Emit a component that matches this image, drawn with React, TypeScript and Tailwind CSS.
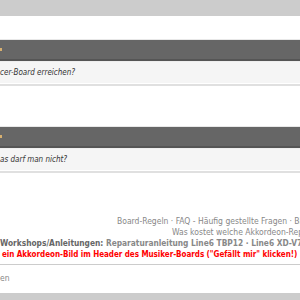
export default function App() {
  const font = { fontFamily: "'DejaVu Sans Condensed', Tahoma, 'DejaVu Sans', sans-serif" };
  return (
    <div className="w-[300px] h-[300px] overflow-hidden bg-white flex flex-col" style={font}>
      <div className="h-[16px] bg-[#cccccc] shrink-0" />
      <div className="h-[23px] shrink-0" />

      <Section text="cer-Board erreichen?" />
      <div className="h-[40px] shrink-0" />
      <Section text="as darf man nicht?" />

      {/* footer links */}
      <div className="mt-[43px] leading-[11px] whitespace-nowrap">
        <div className="pl-[117px] text-[8.5px] text-[#888888]">Board-Regeln · FAQ - Häufig gestellte Fragen · Bitte beachten</div>
        <div className="pl-[172px] text-[8.5px] text-[#888888]">Was kostet welche Akkordeon-Reparatur?</div>
        <div className="text-[8.3px] font-bold">
          <span className="text-[#666666]">Workshops/Anleitungen:</span>{" "}
          <span className="text-[#888888]">Reparaturanleitung Line6 TBP12 · Line6 XD-V75</span>
        </div>
        <div className="pl-[2px] text-[8px] tracking-[-0.04px] font-bold text-[#ff0000]">
          ein Akkordeon-Bild im Header des Musiker-Boards ("Gefällt mir" klicken!)
        </div>
      </div>
      <div className="mt-[4px] border-t border-[#cccccc]" />
      <div className="mt-[7px] text-[8.5px] text-[#888888] whitespace-nowrap">en</div>
      <div className="mt-auto h-[7px] bg-[#cccccc]" />
    </div>
  );
}

function Section({ text }: { text: string }) {
  return (
    <div className="shrink-0">
      <div className="h-px bg-[#e8e8e8]" />
      <div className="h-[21px] bg-[#666666] border-b-2 border-[#555555] flex items-center">
        <span className="w-[2px] h-[3px] bg-[#d8b070]" />
      </div>
      <div className="h-px bg-[#eeeeee]" />
      <div className="h-[21px] bg-[#f5f5f5] flex items-center text-[8px] italic text-[#333333] whitespace-nowrap">
        {text}
      </div>
      <div className="h-px bg-white" />
      <div className="h-[2px] bg-[#e0e0e0]" />
    </div>
  );
}
